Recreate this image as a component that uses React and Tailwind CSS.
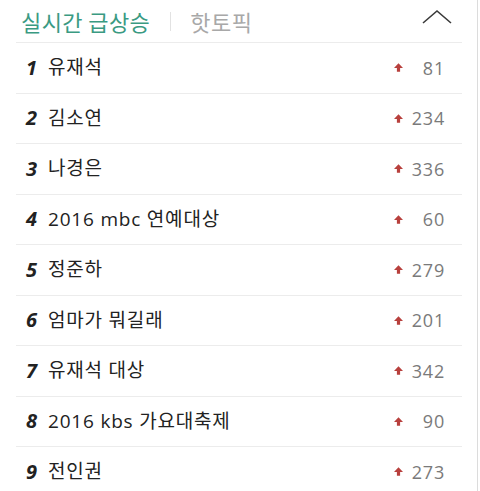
import React from "react";

const items = [
  ["1", "유재석", "81"],
  ["2", "김소연", "234"],
  ["3", "나경은", "336"],
  ["4", "2016 mbc 연예대상", "60"],
  ["5", "정준하", "279"],
  ["6", "엄마가 뭐길래", "201"],
  ["7", "유재석 대상", "342"],
  ["8", "2016 kbs 가요대축제", "90"],
  ["9", "전인권", "273"],
];

function Arrow() {
  return (
    <svg width="9" height="9" viewBox="0 0 9 9" className="block">
      <path d="M4.5 0.3 L9 5 L6.1 5 L6.1 8.8 L2.9 8.8 L2.9 5 L0 5 Z" fill="#b8403d" />
    </svg>
  );
}

export default function App() {
  return (
    <div
      className="w-[480px] h-[491px] bg-white overflow-hidden relative"
      style={{ fontFamily: '"Open Sans", "Noto Sans CJK KR", sans-serif' }}
    >
      <div className="absolute right-[2px] top-0 bottom-0 w-px bg-[#dcdcdc]" />
      <div className="w-[446px] ml-[16px]">
        <div className="h-[43px] flex items-center border-b border-[#ececec] pl-[5px] pr-[8px]">
          <span className="text-[22px] text-[#3a9a82] tracking-[0.4px] leading-none" style={{ fontFamily: '"Noto Sans CJK KR", sans-serif' }}>
            실시간 급상승
          </span>
          <span className="w-px h-[19px] bg-[#e2e2e2] ml-[20px] mr-[19px]" />
          <span className="text-[22px] text-[#a8a8a8] tracking-[0.6px] leading-none" style={{ fontFamily: '"Noto Sans CJK KR", sans-serif' }}>
            핫토픽
          </span>
          <div className="ml-auto mr-[2px] -mt-[8px]">
            <svg width="30" height="16" viewBox="0 0 30 16">
              <path d="M1 14 L15 2 L29 14" fill="none" stroke="#3a3a3a" strokeWidth="1.6" />
            </svg>
          </div>
        </div>
        {items.map(([n, t, v]) => (
          <div key={n} className="h-[50.5px] flex items-center border-b border-[#ececec] pl-[10px] pr-[17px]">
            <span className="italic font-bold text-[20px] text-[#222] w-[22px] leading-none">{n}</span>
            <span className="text-[19px] text-[#222] leading-none tracking-[0.8px]">{t}</span>
            <div className="ml-auto flex items-center">
              <Arrow />
              <span className="w-[42px] text-right text-[18px] text-[#7a7a7a] leading-none tracking-[0.8px]">{v}</span>
            </div>
          </div>
        ))}
      </div>
    </div>
  );
}
